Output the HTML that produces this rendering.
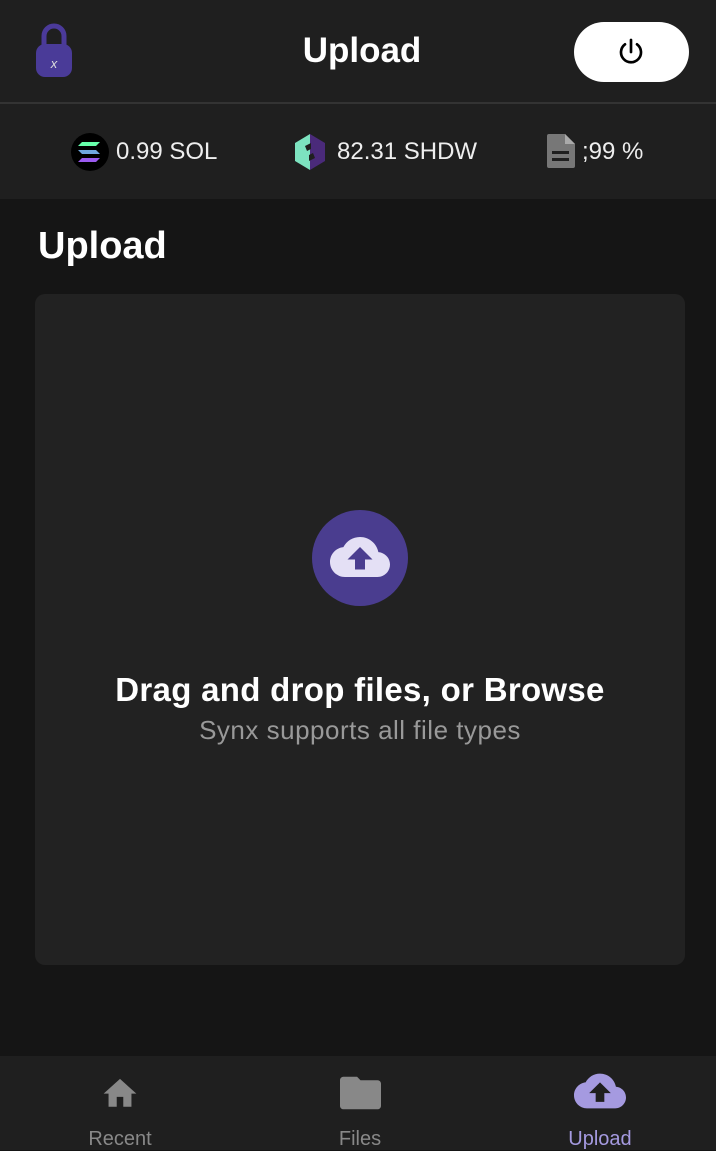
<!DOCTYPE html>
<html><head><style>
body{margin:0;width:716px;height:1150px;background:#151515;font-family:"Liberation Sans",sans-serif;position:relative;overflow:hidden;color:#fff}
.abs{position:absolute}
</style></head><body>
<div class="abs" style="left:0;top:0;width:716px;height:102px;background:#1f1f1f"></div>
<div class="abs" style="left:0;top:102px;width:716px;height:2px;background:#333"></div>
<div class="abs" style="left:0;top:104px;width:716px;height:95px;background:#1f1f1f"></div>
<svg class="abs" style="left:34px;top:22px" width="40" height="56" viewBox="0 0 40 56">
<path d="M10 24V14a10 10 0 0 1 20 0v10" fill="none" stroke="#4b3a9a" stroke-width="5"/>
<rect x="2" y="22" width="36" height="33" rx="9" fill="#4a3b98"/>
<text x="20" y="46" fill="#ddd" font-size="13" font-style="italic" text-anchor="middle" font-family="Liberation Sans">x</text>
</svg>
<div class="abs" style="left:4px;width:716px;top:30px;text-align:center;font-size:35px;font-weight:bold;line-height:42px">Upload</div>
<div class="abs" style="left:574px;top:22px;width:115px;height:60px;border-radius:30px;background:#fff"></div>
<svg class="abs" style="left:615px;top:36px" width="32" height="32" viewBox="0 0 24 24"><path d="M12 3v9M7.5 6.2a7.5 7.5 0 1 0 9 0" fill="none" stroke="#000" stroke-width="2" stroke-linecap="round"/></svg>
<div class="abs" style="left:71px;top:133px;width:38px;height:38px;border-radius:50%;background:#000"></div>
<svg class="abs" style="left:78px;top:142px" width="24" height="20" viewBox="0 0 24 20"><path d="M4 0h18l-4 4H0z" fill="#6fa"/><path d="M4 16h18l-4 4H0z" fill="#9b5bf0"/><path d="M0 8h18l4 4H4z" fill="#70a8e0"/></svg>
<div class="abs" style="left:116px;top:138px;font-size:24px;color:#eee">0.99 SOL</div>
<svg class="abs" style="left:295px;top:134px" width="30" height="36" viewBox="0 0 30 36"><path d="M15 0L0 9v18l15 9z" fill="#7de3c0"/><path d="M15 0l15 9v18l-15 9z" fill="#4a2a7a"/><path d="M10 12l6-3v6l-4 2zM20 24l-6 3v-6l4-2z" fill="#1f1f1f"/></svg>
<div class="abs" style="left:337px;top:138px;font-size:24px;color:#eee">82.31 SHDW</div>
<svg class="abs" style="left:547px;top:134px" width="28" height="34" viewBox="0 0 28 34"><path d="M2 0h16l10 10v22a2 2 0 0 1-2 2H2a2 2 0 0 1-2-2V2a2 2 0 0 1 2-2z" fill="#777"/><path d="M18 0v10h10" fill="#aaa"/><rect x="5" y="17" width="17" height="3" fill="#1f1f1f"/><rect x="5" y="24" width="17" height="3" fill="#1f1f1f"/></svg>
<div class="abs" style="left:582px;top:138px;font-size:24px;color:#eee">;99 %</div>
<div class="abs" style="left:38px;top:225px;font-size:38px;font-weight:bold">Upload</div>
<div class="abs" style="left:35px;top:294px;width:650px;height:671px;border-radius:10px;background:#222"></div>
<div class="abs" style="left:312px;top:510px;width:96px;height:96px;border-radius:50%;background:#4a3d8f"></div>
<svg class="abs" style="left:326px;top:527px" width="68" height="60" viewBox="0 0 24 24"><path d="M19.35 10.04C18.67 6.59 15.640 4 12 4 9.11 4 6.6 5.64 5.35 8.04 2.34 8.36 0 10.91 0 14c0 3.31 2.69 6 6 6h13c2.76 0 5-2.24 5-5 0-2.64-2.05-4.78-4.65-4.96zM14 13v4h-4v-4H7l5-5 5 5h-3z" fill="#e4e0f5"/></svg>
<div class="abs" style="left:0;width:720px;top:671px;text-align:center;font-size:33px;font-weight:bold;letter-spacing:0.3px">Drag and drop files, or Browse</div>
<div class="abs" style="left:0;width:720px;top:715px;text-align:center;font-size:26px;color:#999;letter-spacing:0.5px">Synx supports all file types</div>
<div class="abs" style="left:0;top:1056px;width:716px;height:94px;background:#1f1f1f"></div>
<svg class="abs" style="left:100px;top:1074px" width="40" height="36" viewBox="0 0 24 22"><path d="M10 20v-6h4v6h5v-8h3L12 3 2 12h3v8z" fill="#888"/></svg>
<svg class="abs" style="left:340px;top:1075px" width="41" height="36" viewBox="0 0 24 21"><path d="M10 1H2C.9 1 0 1.9 0 3v15c0 1.1.9 2 2 2h20c1.1 0 2-.9 2-2V5c0-1.1-.9-2-2-2H12z" fill="#888"/></svg>
<svg class="abs" style="left:572px;top:1065px" width="56" height="52" viewBox="0 0 24 24"><path d="M19.35 10.04C18.67 6.59 15.64 4 12 4 9.11 4 6.6 5.64 5.35 8.04 2.34 8.36 0 10.91 0 14c0 3.31 2.69 6 6 6h13c2.76 0 5-2.24 5-5 0-2.64-2.05-4.78-4.65-4.96zM14 13v4h-4v-4H7l5-5 5 5h-3z" fill="#a59ae0"/></svg>
<div class="abs" style="left:60px;width:120px;top:1128px;text-align:center;font-size:20px;color:#888">Recent</div>
<div class="abs" style="left:300px;width:120px;top:1128px;text-align:center;font-size:20px;color:#888">Files</div>
<div class="abs" style="left:540px;width:120px;top:1128px;text-align:center;font-size:20px;color:#a59ae0">Upload</div>
</body></html>
